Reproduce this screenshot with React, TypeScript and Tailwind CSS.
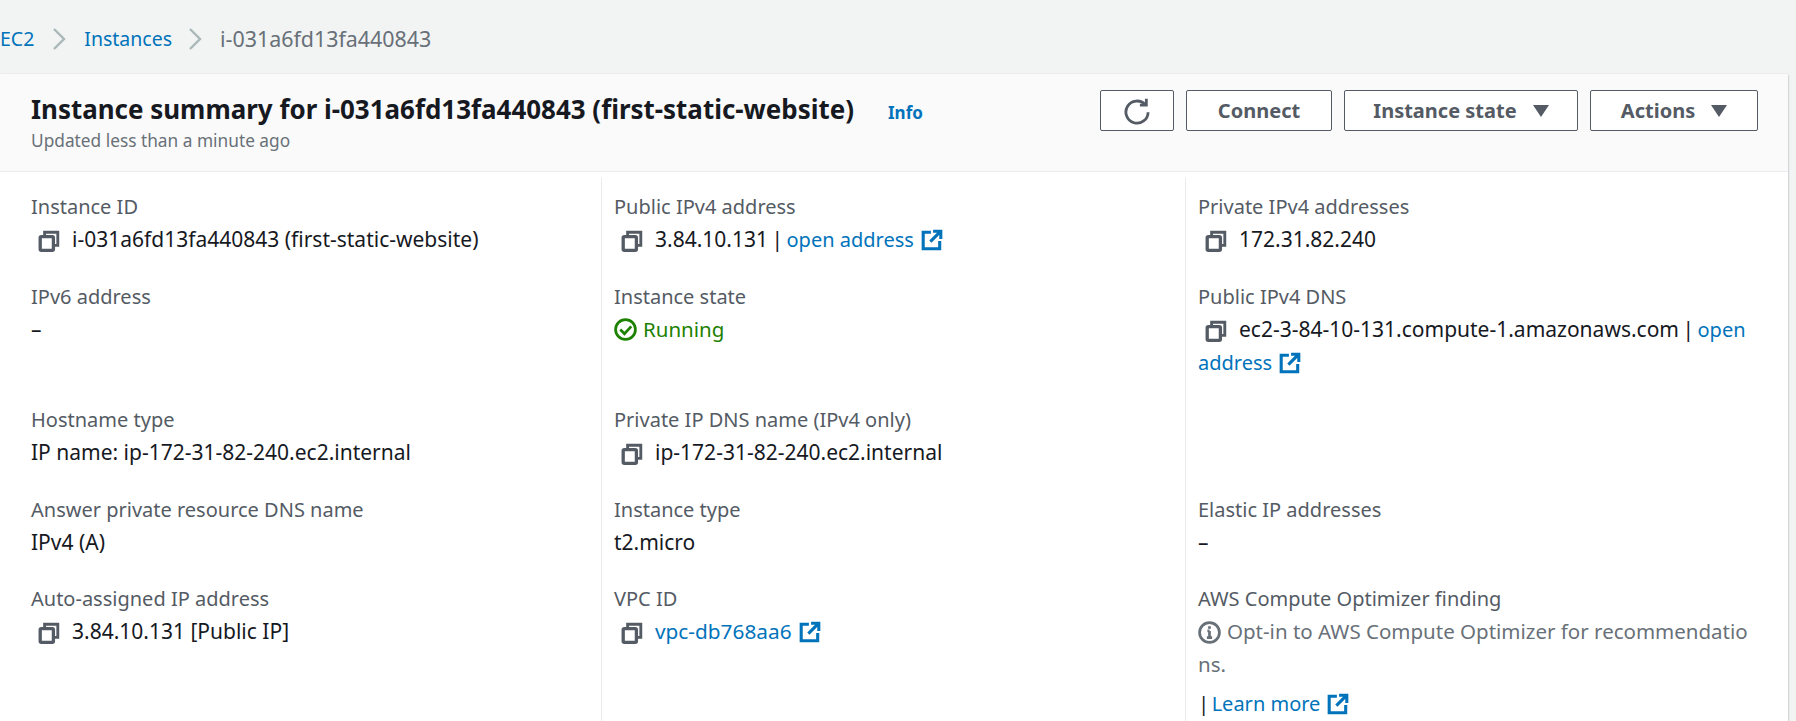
const Copy = () => (
  <svg viewBox="0 0 20 20" className="w-[22px] h-[22px] shrink-0" fill="none" stroke="#545b64" strokeWidth="2.6">
    <rect x="2" y="6" width="12" height="12.5" rx="1" strokeWidth="3" />
    <path d="M6 6V2h12v12h-4" />
  </svg>
);
const Ext = () => (
  <svg viewBox="0 0 20 20" className="inline-block w-[22px] h-[22px] align-[-4px] ml-[7px]" fill="none" stroke="#0073bb" strokeWidth="2.8">
    <path d="M9 3H2v15h15v-7" />
    <path d="M11 2h7v7M18 2L8.5 11.5" />
  </svg>
);
const L = ({ children }: { children: React.ReactNode }) => (
  <span className="text-[#0073bb] text-[20px]">{children}</span>
);
const Pipe = () => <span className="[word-spacing:-2px]"> | </span>;
const Label = ({ children }: { children: React.ReactNode }) => (
  <div className="text-[#545b64] text-[20px] leading-[30px] mt-[1px] h-[31px]">{children}</div>
);
const Cell = ({ first, h, children }: { first?: boolean; h: string; children?: React.ReactNode }) => (
  <div className={`${first ? "pl-[31px]" : "pl-[12px] border-l border-[#eaeded]"} ${h} pr-[16px]`}>{children}</div>
);
const CopyRow = ({ children }: { children: React.ReactNode }) => (
  <div className="leading-[32px] text-[21px] text-[#16191f]">
    <span className="inline-block w-[41px] pl-[7px] align-[-5px]"><Copy /></span>
    {children}
  </div>
);
const Val = ({ children }: { children: React.ReactNode }) => (
  <div className="leading-[32px] text-[21px] text-[#16191f]">{children}</div>
);

export default function App() {
  return (
    <div className="w-[1796px] h-[721px] overflow-hidden bg-[#f2f3f3] text-[20.5px] font-['Noto_Sans',sans-serif]">
      <div className="h-[74px] flex items-center pt-[4px] text-[19.5px]">
        <span className="text-[#0073bb]">EC2</span>
        <svg viewBox="0 0 14 24" className="w-[14px] h-[24px] ml-[18px] mr-[18px]" fill="none" stroke="#aab7b8" strokeWidth="2.4"><path d="M2 2l10 10L2 22" /></svg>
        <span className="text-[#0073bb]">Instances</span>
        <svg viewBox="0 0 14 24" className="w-[14px] h-[24px] ml-[16px] mr-[18px]" fill="none" stroke="#aab7b8" strokeWidth="2.4"><path d="M2 2l10 10L2 22" /></svg>
        <span className="text-[#687078] text-[21.4px]">i-031a6fd13fa440843</span>
      </div>
      <div className="w-[1788px] bg-white shadow-[0_1px_2px_rgba(0,28,36,0.4)] h-[700px]">
        <div className="h-[98px] bg-[#fafafa] border-b border-[#eaeded] flex justify-between pl-[31px] pr-[30px]">
          <div className="pt-[19px]">
            <div className="flex items-baseline">
              <span className="text-[25.95px] font-bold text-[#16191f] leading-[32px]">Instance summary for i-031a6fd13fa440843 (first-static-website)</span>
              <span className="ml-[34px] text-[17px] font-bold text-[#0073bb]">Info</span>
            </div>
            <div className="text-[17.3px] text-[#687078] leading-[24px] mt-[3px]">Updated less than a minute ago</div>
          </div>
          <div className="flex gap-[12px] pt-[16px] h-[58px] box-content text-[20px]">
            <button className="w-[74px] h-[41px] border border-[#545b64] rounded-[2px] bg-white flex items-center justify-center">
              <svg viewBox="0 0 24 24" className="w-[28px] h-[28px]" fill="none" stroke="#545b64" strokeWidth="2.4"><path d="M19 6.5A9.5 9.5 0 1 0 21.5 13" /><path d="M20 1.5V7h-5.5" /></svg>
            </button>
            <button className="w-[146px] h-[41px] border border-[#545b64] rounded-[2px] bg-white text-[#545b64] font-bold">Connect</button>
            <button className="w-[234px] h-[41px] border border-[#545b64] rounded-[2px] bg-white text-[#545b64] font-bold flex items-center justify-center gap-[16px]">
              Instance state
              <svg viewBox="0 0 16 14" className="w-[16px] h-[14px]"><path d="M0 1h16L8 13z" fill="#545b64" /></svg>
            </button>
            <button className="w-[168px] h-[41px] border border-[#545b64] rounded-[2px] bg-white text-[#545b64] font-bold flex items-center justify-center gap-[16px]">
              Actions
              <svg viewBox="0 0 16 14" className="w-[16px] h-[14px]"><path d="M0 1h16L8 13z" fill="#545b64" /></svg>
            </button>
          </div>
        </div>
        <div className="grid grid-cols-[601px_584px_1fr] mt-[6px] pt-0">
          <Cell first h="h-[103px] pt-[13px]"><Label>Instance ID</Label><CopyRow>i-031a6fd13fa440843 (first-static-website)</CopyRow></Cell>
          <Cell h="h-[103px] pt-[13px]"><Label>Public IPv4 address</Label><CopyRow>3.84.10.131<Pipe /><L>open address<Ext /></L></CopyRow></Cell>
          <Cell h="h-[103px] pt-[13px]"><Label>Private IPv4 addresses</Label><CopyRow>172.31.82.240</CopyRow></Cell>

          <Cell first h="h-[123px]"><Label>IPv6 address</Label><Val>–</Val></Cell>
          <Cell h="h-[123px]"><Label>Instance state</Label>
            <div className="leading-[32px] text-[#1d8102] flex items-center">
              <svg viewBox="0 0 22 22" className="w-[23px] h-[23px] mr-[6px]" fill="none" stroke="#1d8102" strokeWidth="2.6"><circle cx="11" cy="11" r="9.5" /><path d="M6 11l4 4 6.5-7" /></svg>
              Running
            </div>
          </Cell>
          <Cell h="h-[123px]"><Label>Public IPv4 DNS</Label><CopyRow>ec2-3-84-10-131.compute-1.amazonaws.com<Pipe /><L>open address<Ext /></L></CopyRow></Cell>

          <Cell first h="h-[90px]"><Label>Hostname type</Label><Val>IP name: ip-172-31-82-240.ec2.internal</Val></Cell>
          <Cell h="h-[90px]"><Label>Private IP DNS name (IPv4 only)</Label><CopyRow>ip-172-31-82-240.ec2.internal</CopyRow></Cell>
          <Cell h="h-[90px]" />

          <Cell first h="h-[89px]"><Label>Answer private resource DNS name</Label><Val>IPv4 (A)</Val></Cell>
          <Cell h="h-[89px]"><Label>Instance type</Label><Val>t2.micro</Val></Cell>
          <Cell h="h-[89px]"><Label>Elastic IP addresses</Label><Val>–</Val></Cell>

          <Cell first h="h-[160px]"><Label>Auto-assigned IP address</Label><CopyRow>3.84.10.131 [Public IP]</CopyRow></Cell>
          <Cell h="h-[160px]"><Label>VPC ID</Label><CopyRow><span className="text-[#0073bb] text-[20.8px]">vpc-db768aa6<Ext /></span></CopyRow></Cell>
          <Cell h="h-[160px]">
            <Label>AWS Compute Optimizer finding</Label>
            <div className="leading-[33px] text-[#687078] break-all mr-[18px]">
              <svg viewBox="0 0 22 22" className="inline-block w-[23px] h-[23px] mr-[6px] align-[-5px]" fill="none" stroke="#687078" strokeWidth="2.6"><circle cx="11" cy="11" r="9.5" /><path d="M11 9.5v6.5M8.5 16h5M9 9.5h2" /><path d="M11 5v2.5" /></svg>
              Opt-in to AWS Compute Optimizer for recommendations.
            </div>
            <div className="leading-[32px] text-[#16191f] mt-[6px]"><span className="[word-spacing:-3px]">| </span><L>Learn more<Ext /></L></div>
          </Cell>
        </div>
      </div>
    </div>
  );
}
